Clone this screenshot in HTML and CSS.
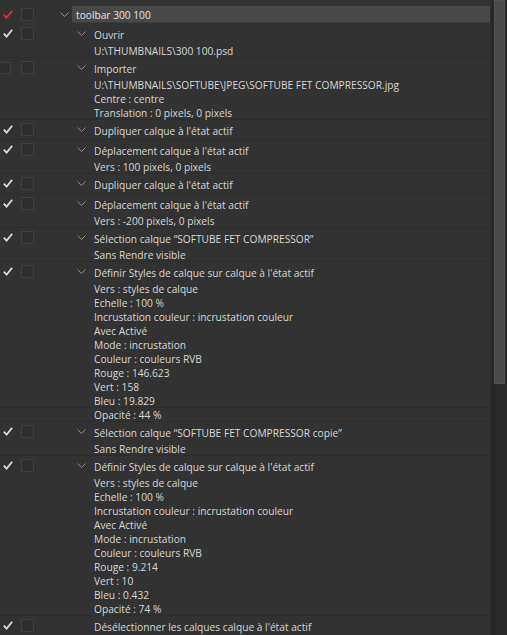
FILE: index.html
```html
<!DOCTYPE html>
<html lang="fr">
<head>
  <meta charset="UTF-8">
  <title>Actions</title>
  <link rel="stylesheet" href="styles.css">
</head>
<body>

<div class="panel">
  <div class="actions-list">

    <!-- action set -->
    <div class="step step-top">
      <span class="tick tick-red"><svg width="10" height="9" viewBox="0 0 10 9"><polyline points="0.8,4.6 3.6,7.6 9.2,0.8" /></svg></span>
      <span class="box"></span>
      <span class="chev chev-top"><svg width="9" height="5" viewBox="0 0 9 5"><polyline points="0.5,0.5 4.5,4.5 8.5,0.5" /></svg></span>
      <span class="label label-top">toolbar 300 100</span>
    </div>

    <div class="group">
      <div class="step">
        <span class="tick"><svg width="10" height="9" viewBox="0 0 10 9"><polyline points="0.8,4.6 3.6,7.6 9.2,0.8" /></svg></span>
        <span class="box"></span>
        <span class="chev"><svg width="9" height="5" viewBox="0 0 9 5"><polyline points="0.5,0.5 4.5,4.5 8.5,0.5" /></svg></span>
        <span class="label">Ouvrir</span>
      </div>
      <div class="params">
        <p>U:\THUMBNAILS\300 100.psd</p>
      </div>
    </div>

    <div class="group">
      <div class="step">
        <span class="tick"><span class="box box-off"></span></span>
        <span class="box"></span>
        <span class="chev"><svg width="9" height="5" viewBox="0 0 9 5"><polyline points="0.5,0.5 4.5,4.5 8.5,0.5" /></svg></span>
        <span class="label">Importer</span>
      </div>
      <div class="params">
        <p>U:\THUMBNAILS\SOFTUBE\JPEG\SOFTUBE FET COMPRESSOR.jpg</p>
        <p>Centre : centre</p>
        <p>Translation : 0 pixels, 0 pixels</p>
      </div>
    </div>

    <div class="group">
      <div class="step">
        <span class="tick"><svg width="10" height="9" viewBox="0 0 10 9"><polyline points="0.8,4.6 3.6,7.6 9.2,0.8" /></svg></span>
        <span class="box"></span>
        <span class="chev"><svg width="9" height="5" viewBox="0 0 9 5"><polyline points="0.5,0.5 4.5,4.5 8.5,0.5" /></svg></span>
        <span class="label">Dupliquer calque à l'état actif</span>
      </div>
    </div>

    <div class="group">
      <div class="step">
        <span class="tick"><svg width="10" height="9" viewBox="0 0 10 9"><polyline points="0.8,4.6 3.6,7.6 9.2,0.8" /></svg></span>
        <span class="box"></span>
        <span class="chev"><svg width="9" height="5" viewBox="0 0 9 5"><polyline points="0.5,0.5 4.5,4.5 8.5,0.5" /></svg></span>
        <span class="label">Déplacement calque à l'état actif</span>
      </div>
      <div class="params">
        <p>Vers : 100 pixels, 0 pixels</p>
      </div>
    </div>

    <div class="group">
      <div class="step">
        <span class="tick"><svg width="10" height="9" viewBox="0 0 10 9"><polyline points="0.8,4.6 3.6,7.6 9.2,0.8" /></svg></span>
        <span class="box"></span>
        <span class="chev"><svg width="9" height="5" viewBox="0 0 9 5"><polyline points="0.5,0.5 4.5,4.5 8.5,0.5" /></svg></span>
        <span class="label">Dupliquer calque à l'état actif</span>
      </div>
    </div>

    <div class="group">
      <div class="step">
        <span class="tick"><svg width="10" height="9" viewBox="0 0 10 9"><polyline points="0.8,4.6 3.6,7.6 9.2,0.8" /></svg></span>
        <span class="box"></span>
        <span class="chev"><svg width="9" height="5" viewBox="0 0 9 5"><polyline points="0.5,0.5 4.5,4.5 8.5,0.5" /></svg></span>
        <span class="label">Déplacement calque à l'état actif</span>
      </div>
      <div class="params">
        <p>Vers : -200 pixels, 0 pixels</p>
      </div>
    </div>

    <div class="group">
      <div class="step">
        <span class="tick"><svg width="10" height="9" viewBox="0 0 10 9"><polyline points="0.8,4.6 3.6,7.6 9.2,0.8" /></svg></span>
        <span class="box"></span>
        <span class="chev"><svg width="9" height="5" viewBox="0 0 9 5"><polyline points="0.5,0.5 4.5,4.5 8.5,0.5" /></svg></span>
        <span class="label">Sélection calque “SOFTUBE FET COMPRESSOR”</span>
      </div>
      <div class="params">
        <p>Sans Rendre visible</p>
      </div>
    </div>

    <div class="group">
      <div class="step">
        <span class="tick"><svg width="10" height="9" viewBox="0 0 10 9"><polyline points="0.8,4.6 3.6,7.6 9.2,0.8" /></svg></span>
        <span class="box"></span>
        <span class="chev"><svg width="9" height="5" viewBox="0 0 9 5"><polyline points="0.5,0.5 4.5,4.5 8.5,0.5" /></svg></span>
        <span class="label">Définir Styles de calque sur calque à l'état actif</span>
      </div>
      <div class="params">
        <p>Vers : styles de calque</p>
        <p>Echelle : 100 %</p>
        <p>Incrustation couleur : incrustation couleur</p>
        <p>Avec Activé</p>
        <p>Mode : incrustation</p>
        <p>Couleur : couleurs RVB</p>
        <p>Rouge : 146.623</p>
        <p>Vert : 158</p>
        <p>Bleu : 19.829</p>
        <p class="ruled">Opacité : 44 %</p>
      </div>
    </div>

    <div class="group">
      <div class="step">
        <span class="tick"><svg width="10" height="9" viewBox="0 0 10 9"><polyline points="0.8,4.6 3.6,7.6 9.2,0.8" /></svg></span>
        <span class="box"></span>
        <span class="chev"><svg width="9" height="5" viewBox="0 0 9 5"><polyline points="0.5,0.5 4.5,4.5 8.5,0.5" /></svg></span>
        <span class="label">Sélection calque “SOFTUBE FET COMPRESSOR copie”</span>
      </div>
      <div class="params">
        <p>Sans Rendre visible</p>
      </div>
    </div>

    <div class="group">
      <div class="step">
        <span class="tick"><svg width="10" height="9" viewBox="0 0 10 9"><polyline points="0.8,4.6 3.6,7.6 9.2,0.8" /></svg></span>
        <span class="box"></span>
        <span class="chev"><svg width="9" height="5" viewBox="0 0 9 5"><polyline points="0.5,0.5 4.5,4.5 8.5,0.5" /></svg></span>
        <span class="label">Définir Styles de calque sur calque à l'état actif</span>
      </div>
      <div class="params">
        <p>Vers : styles de calque</p>
        <p>Echelle : 100 %</p>
        <p>Incrustation couleur : incrustation couleur</p>
        <p>Avec Activé</p>
        <p>Mode : incrustation</p>
        <p>Couleur : couleurs RVB</p>
        <p>Rouge : 9.214</p>
        <p>Vert : 10</p>
        <p>Bleu : 0.432</p>
        <p>Opacité : 74 %</p>
      </div>
    </div>

    <div class="group">
      <div class="step">
        <span class="tick"><svg width="10" height="9" viewBox="0 0 10 9"><polyline points="0.8,4.6 3.6,7.6 9.2,0.8" /></svg></span>
        <span class="box"></span>
        <span class="chev chev-none"></span>
        <span class="label">Désélectionner les calques calque à l'état actif</span>
      </div>
    </div>

  </div>

  <div class="scrollbar">
    <div class="scroll-thumb"></div>
  </div>
</div>

</body>
</html>
```

FILE: styles.css
```css
* {
  margin: 0;
  padding: 0;
  box-sizing: border-box;
}

body {
  height: 635px;
  overflow: hidden;
  background-color: #323232;
  font-family: 'Open Sans', 'DejaVu Sans', sans-serif;
  font-size: 10.2px;
  color: #d8d8d8;
}

.panel {
  display: flex;
  height: 635px;
}

.actions-list {
  flex: 1;
  padding-top: 5px;
  overflow: hidden;
}

/* one step row */
.step {
  display: flex;
  align-items: center;
  height: 19px;
  white-space: nowrap;
}

.tick {
  display: flex;
  align-items: center;
  width: 21px;
  padding-left: 3px;
}

.tick svg polyline {
  fill: none;
  stroke: #dcdcdc;
  stroke-width: 1.8;
}

.tick-red svg polyline {
  stroke: #d8313a;
}

.box {
  display: block;
  width: 13px;
  height: 13px;
  border: 1px solid #404040;
  background-color: #2e2e2e;
}

.box-off {
  margin-left: -4px;
  width: 12px;
  height: 12px;
}

.chev {
  display: flex;
  align-items: center;
  width: 9px;
  margin-left: 43px;
}

.chev-top {
  margin-left: 26px;
}

.chev svg polyline {
  fill: none;
  stroke: #8c8c8c;
  stroke-width: 1;
}

.label {
  margin-left: 8px;
  padding-top: 2px;
}

.label-top {
  flex: 1;
  margin-left: 3px;
  padding: 0 0 0 4px;
  height: 17px;
  line-height: 18px;
  background-color: #484848;
  border-bottom: 1px solid #3c3c3c;
  color: #e4e4e4;
}

.group {
  border-bottom: 1px solid #2c2c2c;
}

.params p {
  height: 14px;
  line-height: 16px;
  padding-left: 94px;
  white-space: nowrap;
}

.params .ruled {
  border-top: 1px solid #2c2c2c;
  line-height: 15px;
}

.scrollbar {
  width: 17px;
  padding: 0 2px 0 3px;
  background-color: #282828;
  border-left: 1px solid #2e2e2e;
}

.scroll-thumb {
  height: 384px;
  background-color: #4a4a4a;
  border: 1px solid #505050;
}
```
